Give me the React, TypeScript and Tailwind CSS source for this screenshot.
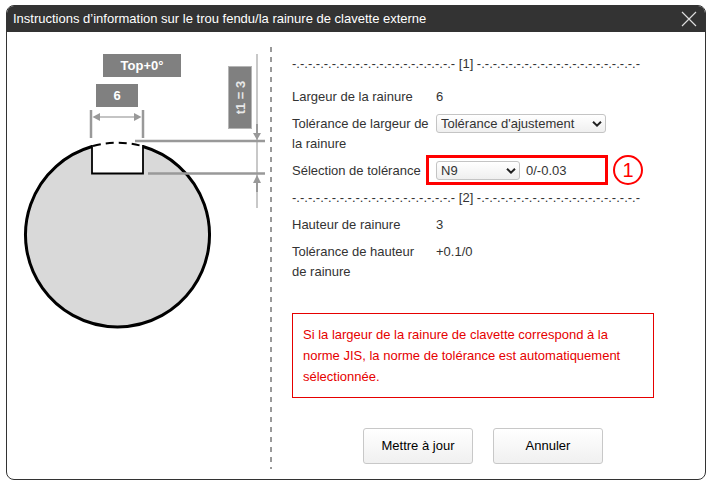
import type { ReactNode } from "react";
import { clsx } from "clsx";

const dashes = "-.".repeat(20) + "-";

function Separator({ index }: { index: number }) {
  return (
    <div className="whitespace-nowrap">
      {dashes} [{index}] {dashes}
    </div>
  );
}

function Row({ label, htmlFor, children }: { label: string; htmlFor?: string; children: ReactNode }) {
  return (
    <div className="flex items-start">
      {htmlFor ? (
        <label htmlFor={htmlFor} className="w-36 shrink-0 pr-1.5">{label}</label>
      ) : (
        <div className="w-36 shrink-0 pr-1.5">{label}</div>
      )}
      <div className="relative flex items-start gap-1.5">{children}</div>
    </div>
  );
}

function Select({ id, options, className }: { id: string; options: string[]; className?: string }) {
  return (
    <div className={clsx("relative", className)}>
      <select
        id={id}
        className="block h-[19px] w-full appearance-none rounded-[3px] border border-[#c4c4c4] bg-linear-to-b from-white to-[#efefef] pl-1 leading-4 text-[#333]"
      >
        {options.map((o) => (
          <option key={o}>{o}</option>
        ))}
      </select>
      <svg className="pointer-events-none absolute top-1.5 right-1 h-2 w-2.5" viewBox="0 0 10 8" fill="none">
        <path d="M1 1.8 L5 5.6 L9 1.8" stroke="#222" strokeWidth="2" />
      </svg>
    </div>
  );
}

function GrooveDrawing() {
  return (
    <svg
      className="h-[300px] w-[263px] shrink-0"
      viewBox="7 32 263 300"
      fill="none"
      fontFamily="'Liberation Sans', Arial, sans-serif"
      fontSize="13"
      fontWeight="bold"
      textAnchor="middle"
      role="img"
      aria-label="Rainure de clavette externe"
    >
      {/* shaft */}
      <path d="M92 146.5 A92 92 0 1 0 143 146.5 V173.5 H92 Z" fill="#d9d9d9" />
      <path d="M92 146.5 A92 92 0 1 0 143 146.5" stroke="#000" strokeWidth="3" />
      <path d="M92 145 V173.5 H143 V145" stroke="#000" strokeWidth="1.8" />
      <path d="M93 146 A92 92 0 0 1 142 146" stroke="#000" strokeWidth="2" strokeDasharray="8 5" />

      {/* width dimension */}
      <path d="M91 110 V138 M143 110 V138" stroke="#999" strokeWidth="2.5" />
      <path d="M97 117 H137" stroke="#c4c4c4" strokeWidth="1.8" />
      <path d="M92.5 117 L100 113 V121 Z M141.5 117 L134 113 V121 Z" fill="#999" />

      {/* depth dimension */}
      <path d="M257 54 V208" stroke="#c8c8c8" strokeWidth="2" />
      <path d="M257 124 V134 M257 182 V192" stroke="#999" strokeWidth="2" />
      <path d="M253 133 H261 L257 140 Z M253 183 H261 L257 175 Z" fill="#999" />
      <path d="M135 141 H265 M148 173.5 H265" stroke="#999" strokeWidth="2.5" />

      <rect x="103" y="54" width="78" height="23" fill="#808080" />
      <text x="142" y="70" fill="#fff">Top+0°</text>
      <rect x="96" y="84" width="42" height="23" fill="#808080" />
      <text x="117" y="100" fill="#fff">6</text>
      <rect x="228.5" y="66.5" width="23" height="62" fill="#808080" stroke="#b5b5b5" />
      <text transform="translate(244.5 97.5) rotate(-90)" fill="#e8e8e8">t1 = 3</text>
    </svg>
  );
}

const buttonClass =
  "h-9 w-[110px] rounded-[3px] border border-[#c8c8c8] bg-linear-to-b from-white to-[#f0f0f0] text-black";

export default function App() {
  return (
    <div className="bg-white pt-[5px] pr-1 pb-[5px] pl-1.5 font-['Liberation_Sans',Arial,sans-serif] text-[13px] leading-5 text-[#333]">
      <div className="overflow-hidden rounded-lg border border-[#333]">
        <header className="flex h-[26px] items-center justify-between bg-[#333] pr-2 pl-1.5 text-white">
          <h1 className="text-[13px]">
            Instructions d’information sur le trou fendu/la rainure de clavette externe
          </h1>
          <button type="button" aria-label="Fermer">
            <svg className="block h-4 w-4" viewBox="0 0 16 16" stroke="#ddd" strokeWidth="1.2">
              <path d="M1 1 L15 15 M15 1 L1 15" />
            </svg>
          </button>
        </header>

        <main className="flex">
          <GrooveDrawing />
          <div className="mt-[15px] mb-2.5 w-0.5 shrink-0 bg-[repeating-linear-gradient(to_bottom,#999_0_5px,transparent_5px_10px)]" />

          <form className="min-w-0 flex-1 pt-[22px] pr-[31px] pb-[15px] pl-5">
            <Separator index={1} />
            <div className="mt-[13px] mb-[7px] flex flex-col gap-[7px]">
              <Row label="Largeur de la rainure">6</Row>
              <Row label="Tolérance de largeur de la rainure" htmlFor="width-tolerance">
                <Select
                  id="width-tolerance"
                  className="w-[170px]"
                  options={["Tolérance d'ajustement"]}
                />
              </Row>
              <Row label="Sélection de tolérance" htmlFor="tolerance">
                <Select id="tolerance" className="w-[84px]" options={["N9"]} />
                <span>0/-0.03</span>
                <div className="pointer-events-none absolute -top-1.5 -left-2.5 h-[30px] w-[182px] border-3 border-[#f00]" />
                <div className="absolute -top-1.5 left-[177px] flex size-[30px] items-center justify-center rounded-full border-2 border-[#f00] text-xl text-[#f00]">
                  1
                </div>
              </Row>
            </div>

            <Separator index={2} />
            <div className="mt-[7px] flex flex-col gap-[7px]">
              <Row label="Hauteur de rainure">3</Row>
              <Row label="Tolérance de hauteur de rainure">+0.1/0</Row>
            </div>

            <p className="mt-[31px] mr-5 border border-[#e60000] p-2.5 leading-[21px] text-[#e60000]">
              Si la largeur de la rainure de clavette correspond à la norme JIS, la norme de tolérance est
              automatiquement sélectionnée.
            </p>

            <div className="mt-[30px] flex justify-center gap-5">
              <button type="button" className={buttonClass}>Mettre à jour</button>
              <button type="button" className={buttonClass}>Annuler</button>
            </div>
          </form>
        </main>
      </div>
    </div>
  );
}
